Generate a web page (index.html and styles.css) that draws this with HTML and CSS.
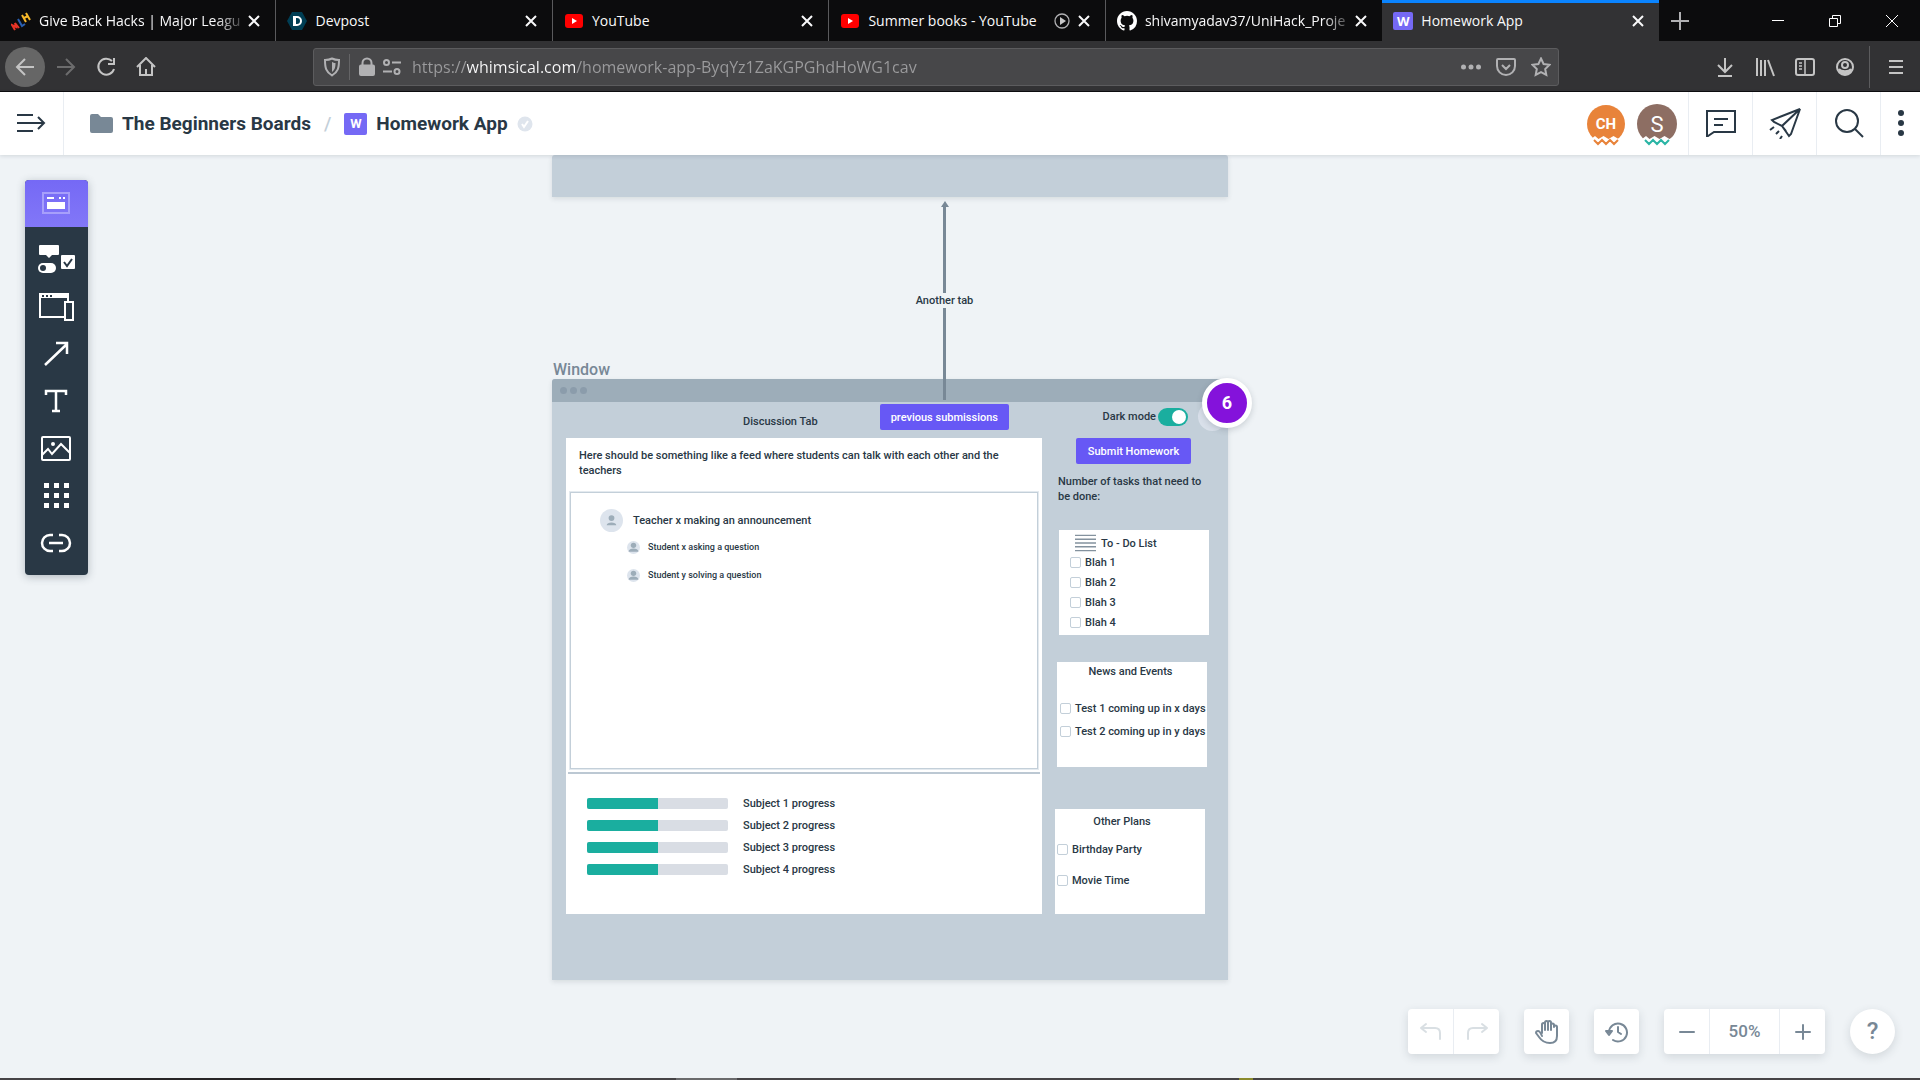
FILE: index.html
```html
<!DOCTYPE html>
<html lang="en">
<head>
  <meta charset="UTF-8">
  <meta name="viewport" content="width=device-width, initial-scale=1.0">
  <title>Homework App</title>
  <link rel="stylesheet" href="styles.css">
</head>
<body>
  <!-- Browser tabs -->
  <div class="tab-strip">
    <div class="tab">
      <svg class="favicon" viewBox="0 0 20 20" fill="none" stroke-width="2"><path d="m4 19-3-5 4 2-1-4 4 5" stroke="#e73427"/><path d="m7 8 4 7 3-2" stroke="#2a5fb0"/><path d="m11 4 4 7m0-9 4 7m-6-2 4-2" stroke="#f8b92a"/></svg>
      <span class="tab-title tab-title-long">Give Back Hacks | Major Leagu</span>
      <button class="tab-close" aria-label="Close tab"><svg viewBox="0 0 12 12"><path d="m1 1 10 10M11 1 1 11"/></svg></button>
    </div>
    <div class="tab">
      <svg class="favicon" viewBox="0 0 20 20"><path d="M5 1h10l5 9-5 9H5l-5-9z" fill="#003e54"/><path d="M6 5h4a5 5 0 0 1 0 10H6zm3 2v6h1a3 3 0 0 0 0-6z" fill="#fff" fill-rule="evenodd"/></svg>
      <span class="tab-title">Devpost</span>
      <button class="tab-close" aria-label="Close tab"><svg viewBox="0 0 12 12"><path d="m1 1 10 10M11 1 1 11"/></svg></button>
    </div>
    <div class="tab">
      <svg class="favicon" viewBox="0 0 20 20"><rect x="1" y="3" width="18" height="14" rx="3" fill="#f00"/><path d="m8 7 5 3-5 3z" fill="#fff"/></svg>
      <span class="tab-title">YouTube</span>
      <button class="tab-close" aria-label="Close tab"><svg viewBox="0 0 12 12"><path d="m1 1 10 10M11 1 1 11"/></svg></button>
    </div>
    <div class="tab">
      <svg class="favicon" viewBox="0 0 20 20"><rect x="1" y="3" width="18" height="14" rx="3" fill="#f00"/><path d="m8 7 5 3-5 3z" fill="#fff"/></svg>
      <span class="tab-title">Summer books - YouTube</span>
      <button class="tab-play" aria-label="Play tab"><svg viewBox="0 0 16 16"><circle cx="8" cy="8" r="7" fill="none" stroke="#b1b1b3" stroke-width="1.3"/><path d="m6 4 6 4-6 4z" fill="#c8c8c8"/></svg></button>
      <button class="tab-close" aria-label="Close tab"><svg viewBox="0 0 12 12"><path d="m1 1 10 10M11 1 1 11"/></svg></button>
    </div>
    <div class="tab">
      <svg class="favicon" viewBox="0 0 16 16" fill="#fff"><path d="M8 0C3.58 0 0 3.58 0 8c0 3.54 2.29 6.53 5.47 7.59.4.07.55-.17.55-.38 0-.19-.01-.82-.01-1.49-2.01.37-2.53-.49-2.69-.94-.09-.23-.48-.94-.82-1.13-.28-.15-.68-.52-.01-.53.63-.01 1.08.58 1.23.82.72 1.21 1.87.87 2.33.66.07-.52.28-.87.51-1.07-1.78-.2-3.64-.89-3.64-3.95 0-.87.31-1.59.82-2.15-.08-.2-.36-1.02.08-2.12 0 0 .67-.21 2.2.82a7.6 7.6 0 0 1 4 0c1.53-1.04 2.2-.82 2.2-.82.44 1.1.16 1.92.08 2.12.51.56.82 1.27.82 2.15 0 3.07-1.87 3.75-3.65 3.95.29.25.54.73.54 1.48 0 1.07-.01 1.93-.01 2.2 0 .21.15.46.55.38A8 8 0 0 0 16 8c0-4.42-3.58-8-8-8z"/></svg>
      <span class="tab-title tab-title-long">shivamyadav37/UniHack_Proje</span>
      <button class="tab-close" aria-label="Close tab"><svg viewBox="0 0 12 12"><path d="m1 1 10 10M11 1 1 11"/></svg></button>
    </div>
    <div class="tab tab-active">
      <span class="favicon logo-w">W</span>
      <span class="tab-title">Homework App</span>
      <button class="tab-close" aria-label="Close tab"><svg viewBox="0 0 12 12"><path d="m1 1 10 10M11 1 1 11"/></svg></button>
    </div>
    <button class="new-tab" aria-label="New tab"><svg viewBox="0 0 18 18"><path d="M9 0v18M0 9h18" stroke="#b1b1b3" stroke-width="2"/></svg></button>
    <div class="window-controls">
      <button aria-label="Minimize"><svg viewBox="0 0 14 14"><path d="M1 6.500h12"/></svg></button>
      <button aria-label="Restore"><svg viewBox="0 0 14 14"><path d="M1.500 4.500h8v8h-8zM4.500 4V1.500h8v8H10"/></svg></button>
      <button aria-label="Close window"><svg viewBox="0 0 14 14"><path d="m1 1 12 12M13 1 1 13"/></svg></button>
    </div>
  </div>

  <!-- Browser navigation -->
  <div class="nav-bar">
    <div class="nav-buttons">
      <button class="nav-back" aria-label="Back"><svg viewBox="0 0 20 20"><path d="M19 10H2m8-8-8 8 8 8"/></svg></button>
      <button class="nav-forward" aria-label="Forward"><svg viewBox="0 0 20 20"><path d="M1 10h17m-8-8 8 8-8 8"/></svg></button>
      <button aria-label="Reload"><svg viewBox="0 0 20 20"><path d="M16 4a8 8 0 1 0 2 8M18 1v6h-6"/></svg></button>
      <button aria-label="Home"><svg viewBox="0 0 20 20"><path d="m1 10 9-9 9 9M4 8v10h12V8M10 18v-6"/></svg></button>
    </div>
    <div class="url-bar">
      <svg class="url-icon" viewBox="0 0 20 20"><path d="M10 1.500c2 1 4 1.500 7 1.500 0 8-1 12-7 15.500C4 15 3 11 3 3c3 0 5-.5 7-1.500z"/><path d="M10 5c1 .5 2 1 3.500 1 0 5-1 7-3.500 9z" fill="#b1b1b3" stroke="none"/></svg>
      <span class="url-separator"></span>
      <svg class="url-icon" viewBox="0 0 20 20"><path d="M5.500 9V6a4.500 4.500 0 0 1 9 0v3"/><rect x="3" y="8.500" width="14" height="9.500" rx="1" fill="#b1b1b3"/></svg>
      <svg class="url-icon" viewBox="0 0 20 20"><circle cx="4.500" cy="5.500" r="2.500"/><path d="M10 5.500h9M1 14.500h9"/><circle cx="15" cy="14.500" r="2.500"/></svg>
      <input class="url-input" type="text" aria-label="Address" value="https://whimsical.com/homework-app-ByqYz1ZaKGPGhdHoWG1cav">
      <button aria-label="Page actions"><svg viewBox="0 0 20 20"><g fill="#b1b1b3" stroke="none"><circle cx="2.500" cy="10" r="2.500"/><circle cx="10" cy="10" r="2.500"/><circle cx="17.500" cy="10" r="2.500"/></g></svg></button>
      <button aria-label="Save to Pocket"><svg viewBox="0 0 20 20"><path d="M2 2h16q1 0 1 1v6a9 9 0 0 1-18 0V3q0-1 1-1zM6 8l4 4 4-4"/></svg></button>
      <button aria-label="Bookmark"><svg viewBox="0 0 20 20"><path d="m10 1.500 2.600 5.500 6 .8-4.400 4.200 1.100 6L10 15.200 4.700 18l1.100-6L1.400 7.800l6-.8z"/></svg></button>
    </div>
    <div class="nav-extra">
      <button aria-label="Downloads"><svg viewBox="0 0 20 20"><path d="M10 1v13m-7-6 7 7 7-7M3 19h14"/></svg></button>
      <button aria-label="Library"><svg viewBox="0 0 20 20"><path d="M2 1v18M6 3v16M10 3v16m3-16 6 16"/></svg></button>
      <button aria-label="Sidebars"><svg viewBox="0 0 20 20"><rect x="1" y="2" width="18" height="16" rx="2"/><path d="M10 2v16M4 6h3M4 9h3M4 12h3" stroke-width="1.500"/></svg></button>
      <button aria-label="Account"><svg viewBox="0 0 20 20"><circle cx="10" cy="10" r="8"/><circle cx="10" cy="8" r="3"/><path d="M4 12c2 3 10 3 12 0-1 7-11 7-12 0z" fill="#c4c4c4"/></svg></button>
      <span class="nav-divider"></span>
      <button aria-label="Menu"><svg viewBox="0 0 20 20"><path d="M3 4h14M3 10h14M3 16h14"/></svg></button>
    </div>
  </div>

  <!-- App header -->
  <header class="app-header">
    <button class="header-cell header-menu" aria-label="Open sidebar"><svg viewBox="0 0 32 20"><path d="M2 2h16M2 10h27M2 18h16m5-14 6 6-6 6"/></svg></button>
    <nav class="breadcrumbs">
      <svg class="folder" viewBox="0 0 23 19"><path d="M2 0h6l3 3h10q2 0 2 2v12q0 2-2 2H2q-2 0-2-2V2q0-2 2-2z" fill="#788896"/></svg>
      <a href="#">The Beginners Boards</a>
      <span class="slash">/</span>
      <span class="board-logo logo-w">W</span>
      <a href="#">Homework App</a>
      <svg class="saved" viewBox="0 0 16 16"><circle cx="8" cy="8" r="7.500" fill="#dfe5ed"/><path d="m5 8 2 3 4-6" fill="none" stroke="#fff" stroke-width="2"/></svg>
    </nav>
    <div class="avatars">
      <svg viewBox="0 0 40 44"><circle cx="20" cy="20" r="19" fill="#e8833a"/><path d="m5 35 4-3 3.500 3 5-3 5 3 5-3 5 3 3-2v12H5z" fill="#fff"/><path d="m8 36 4 4 4-4 4 4 4-4 4 4 4-4" fill="none" stroke="#e8833a" stroke-width="2"/><text x="20" y="25" class="initials">CH</text></svg>
      <svg viewBox="0 0 40 44"><circle cx="20" cy="20" r="20" fill="#8d6e63"/><path d="m5 35 4-3 3.500 3 5-3 5 3 5-3 5 3 3-2v12H5z" fill="#fff"/><path d="m8 36 4 4 4-4 4 4 4-4 4 4 4-4" fill="none" stroke="#2ab5a5" stroke-width="2"/><text x="20" y="28" class="initials initials-single">S</text></svg>
    </div>
    <button class="header-cell" aria-label="Comments"><svg viewBox="0 0 32 32"><path d="M2 4h28v21H9l-6 4H2z"/><path d="M9 12h14M9 18h9"/></svg></button>
    <button class="header-cell" aria-label="Share"><svg viewBox="0 0 32 32"><path d="M31 2 3 13l2 2 8 4zM31 2 13 19l7 10 2-2zM13 19l4 5M5 20l-4 3m9 1-3 3m6 2-2 3"/></svg></button>
    <button class="header-cell" aria-label="Search"><svg viewBox="0 0 32 32"><circle cx="14" cy="14" r="11"/><path d="m22 22 8 8"/></svg></button>
    <button class="header-cell header-more" aria-label="More"><svg viewBox="0 0 8 32"><g fill="#293845" stroke="none"><circle cx="4" cy="6" r="3"/><circle cx="4" cy="16" r="3"/><circle cx="4" cy="26" r="3"/></g></svg></button>
  </header>

  <!-- Board -->
  <main class="canvas">
    <div class="toolbar">
      <button class="tool tool-active" aria-label="Wireframe"><svg viewBox="0 0 40 32"><rect x="7" y="5" width="26" height="20" fill="none" stroke="#a79ffb" stroke-width="2"/><path d="M11 9h7v2h-7zm12 0h2v2h-2zm4 0h2v2h-2zM11 14h18v7H11z" fill="#fff"/></svg></button>
      <button class="tool" aria-label="Elements"><svg viewBox="0 0 40 32"><path d="M4 1h18q1 0 1 1v8q0 1-1 1h-6l-3 3-3-3H4q-1 0-1-1V2q0-1 1-1z" fill="#fff"/><rect x="2" y="19" width="18" height="10" rx="5" fill="#fff"/><circle cx="7" cy="24" r="3" fill="#293845"/><rect x="25" y="11" width="14" height="14" rx="1" fill="#fff"/><path d="m28 18 3 4 5-7" fill="none" stroke="#293845" stroke-width="2"/></svg></button>
      <button class="tool" aria-label="Frames"><svg viewBox="0 0 40 32" fill="none" stroke="#fff" stroke-width="2"><path d="M28 26H4V3h28v7"/><path d="M4 5h28" stroke-width="4"/><path d="M6 5h2m2 0h2m2 0h2" stroke="#293845"/><path d="M29 11h8v18h-8z"/></svg></button>
      <button class="tool" aria-label="Arrow"><svg viewBox="0 0 40 32" fill="none" stroke="#fff" stroke-width="2.500"><path d="M9 27 31 6M20 5h11v11"/></svg></button>
      <button class="tool" aria-label="Text"><svg viewBox="0 0 40 32" fill="none" stroke="#fff" stroke-width="2.500"><path d="M10 10V6h20v4M20 6v20m-4 0h8"/></svg></button>
      <button class="tool" aria-label="Image"><svg viewBox="0 0 40 32" fill="none" stroke="#fff" stroke-width="2"><rect x="6" y="5" width="28" height="23" rx="1"/><path d="m6 23 6-6 4 5 9-10 9 9"/><circle cx="17" cy="12" r="1"/></svg></button>
      <button class="tool" aria-label="Icons"><svg viewBox="0 0 40 32" fill="#fff"><path d="M8 4h5v5H8zm10 0h5v5h-5zm10 0h5v5h-5zM8 14h5v5H8zm10 0h5v5h-5zm10 0h5v5h-5zM8 24h5v5H8zm10 0h5v5h-5zm10 0h5v5h-5z"/></svg></button>
      <button class="tool" aria-label="Link"><svg viewBox="0 0 40 32" fill="none" stroke="#fff" stroke-width="2.500"><path d="M17 9h-3a8 8 0 0 0 0 16h3m6-16h3a8 8 0 0 1 0 16h-3M13 17h14"/></svg></button>
    </div>

    <div class="frame frame-above"></div>
    <section class="frame-group">
      <h2 class="frame-name">Window</h2>
      <div class="frame">
        <div class="frame-title"><i></i><i></i><i></i></div>
        <div class="frame-body">
          <div class="main-column">
            <div class="main-head">
              <span>Discussion Tab</span>
              <button class="btn">previous submissions</button>
            </div>
            <div class="panel">
              <p class="intro">Here should be something like a feed where students can talk with each other and the teachers</p>
              <div class="feed">
                <div class="post"><svg viewBox="0 0 24 24"><circle cx="12" cy="12" r="12" fill="#dde4ed"/><circle cx="12" cy="9.500" r="3" fill="#9dadb9"/><path d="M7 17c0-4 10-4 10 0z" fill="#9dadb9"/></svg>Teacher x making an announcement</div>
                <div class="post reply"><svg viewBox="0 0 24 24"><circle cx="12" cy="12" r="12" fill="#dde4ed"/><circle cx="12" cy="8" r="5" fill="#9dadb9"/><path d="M3 20c0-8 18-8 18 0z" fill="#9dadb9"/></svg>Student x asking a question</div>
                <div class="post reply"><svg viewBox="0 0 24 24"><circle cx="12" cy="12" r="12" fill="#dde4ed"/><circle cx="12" cy="8" r="5" fill="#9dadb9"/><path d="M3 20c0-8 18-8 18 0z" fill="#9dadb9"/></svg>Student y solving a question</div>
              </div>
              <hr>
              <div class="subjects">
                <div class="subject"><progress id="subject1" value="50" max="100"></progress><label for="subject1">Subject 1 progress</label></div>
                <div class="subject"><progress id="subject2" value="50" max="100"></progress><label for="subject2">Subject 2 progress</label></div>
                <div class="subject"><progress id="subject3" value="50" max="100"></progress><label for="subject3">Subject 3 progress</label></div>
                <div class="subject"><progress id="subject4" value="50" max="100"></progress><label for="subject4">Subject 4 progress</label></div>
              </div>
            </div>
          </div>
          <div class="side-column">
            <div class="side-head">
              <label for="darkMode">Dark mode</label>
              <input type="checkbox" id="darkMode" class="switch" checked>
              <span class="ghost-dot"></span>
            </div>
            <button class="btn btn-submit">Submit Homework</button>
            <p class="tasks">Number of tasks that need to be done:</p>
            <div class="card card-todo">
              <h3><svg viewBox="0 0 22 18"><path d="M0 1h22M0 5h22M0 9h22M0 13h22M0 17h22" stroke="#84929e" stroke-width="1.500"/></svg>To - Do List</h3>
              <label><input type="checkbox">Blah 1</label>
              <label><input type="checkbox">Blah 2</label>
              <label><input type="checkbox">Blah 3</label>
              <label><input type="checkbox">Blah 4</label>
            </div>
            <div class="card card-news">
              <h3>News and Events</h3>
              <label><input type="checkbox">Test 1 coming up in x days</label>
              <label><input type="checkbox">Test 2 coming up in y days</label>
            </div>
            <div class="card card-plans">
              <h3>Other Plans</h3>
              <label><input type="checkbox">Birthday Party</label>
              <label><input type="checkbox">Movie Time</label>
            </div>
          </div>
        </div>
      </div>
    </section>

    <div class="connector">
      <span class="connector-head"></span>
      <span class="connector-line"></span>
      <span class="connector-label">Another tab</span>
      <span class="connector-line connector-tail"></span>
    </div>
    <div class="comment-count">6</div>

    <div class="controls">
      <div class="control-group">
        <button aria-label="Undo" class="disabled"><svg viewBox="0 0 24 24"><path d="M7 4 2 8l5 4M2 8h14q5 0 5 5v6"/></svg></button>
        <button aria-label="Redo" class="disabled"><svg viewBox="0 0 24 24"><path d="m17 4 5 4-5 4M22 8H8q-5 0-5 5v6"/></svg></button>
      </div>
      <div class="control-group">
        <button aria-label="Pan"><svg viewBox="0 0 24 24"><path d="M7 13V4.500q0-1.500 1.500-1.500T10 4.500V10V2.500Q10 1 11.500 1T13 2.500V10V2.500Q13 1 14.500 1T16 2.500V10V5q0-1.500 1.500-1.500t1.500 1.500v2q0-1.500 1.500-1.500T22 7v9q0 7-7 7-7 0-11-6l-3-4q0-2 2-2t4 5"/></svg></button>
      </div>
      <div class="control-group">
        <button aria-label="History"><svg viewBox="0 0 24 24"><path d="M4 12a9 9 0 1 1 4 8M1 11l3 4 3-4zM13 7v5l3 2"/></svg></button>
      </div>
      <div class="control-group">
        <button aria-label="Zoom out"><svg viewBox="0 0 24 24"><path d="M5 12h14"/></svg></button>
        <button class="zoom-level">50%</button>
        <button aria-label="Zoom in"><svg viewBox="0 0 24 24"><path d="M5 12h14M12 5v14"/></svg></button>
      </div>
      <div class="control-group control-help">
        <button>?</button>
      </div>
    </div>
  </main>
  <div class="taskbar"><span class="task-dark"></span><span class="task-light"></span><span class="task-yellow"></span></div>
</body>
</html>
```
FILE: styles.css
```css
* {
  box-sizing: border-box;
}
body {
  margin: 0;
  min-height: 100vh;
  display: flex;
  flex-direction: column;
  font-family: Roboto, sans-serif;
  font-weight: 500;
  color: #293845;
  background-color: #eff3f6;
}
button {
  border: 0;
  padding: 0;
  background: none;
  font: inherit;
  color: inherit;
  display: flex;
  align-items: center;
  justify-content: center;
}
svg {
  flex: none;
}
a {
  color: inherit;
  text-decoration: none;
}
.logo-w {
  background-color: #7569f5;
  color: #fff;
  border-radius: 2px;
  font-weight: 700;
  text-align: center;
}

/* browser tabs */
.tab-strip {
  display: flex;
  height: 41px;
  background-color: #0c0c0d;
  font-family: "Open Sans", sans-serif;
  font-weight: 400;
  font-size: 14px;
  color: #f9f9fa;
}
.tab {
  flex: 0 0 14.4%;
  min-width: 0;
  display: flex;
  align-items: center;
  padding: 0 15px 0 11px;
  border-right: 1px solid #5a5a5c;
}
.tab:nth-child(5) {
  border-right: 0;
}
.tab-active {
  background-color: #323234;
  border-right: 0;
  border-top: 3px solid #0a84ff;
  padding-bottom: 3px;
}
.favicon {
  flex: none;
  width: 20px;
  height: 20px;
  margin-right: 8px;
}
.tab-strip .logo-w {
  height: 18px;
  font-size: 13px;
  line-height: 18px;
}
.tab-title {
  flex: 1;
  min-width: 0;
  white-space: nowrap;
  line-height: 24px;
}
.tab-title-long {
  mask-image: linear-gradient(to left, transparent, #000 32px);
}
.tab-close svg {
  width: 12px;
  height: 12px;
  stroke: #f9f9fa;
  stroke-width: 2;
}
.tab-play {
  margin-right: 8px;
}
.tab-play svg {
  width: 16px;
  height: 16px;
}
.new-tab {
  width: 42px;
}
.new-tab svg {
  width: 18px;
  height: 18px;
}
.window-controls {
  display: flex;
  margin-left: auto;
}
.window-controls button {
  width: 57px;
}
.window-controls svg {
  width: 14px;
  height: 14px;
  fill: none;
  stroke: #fff;
}

/* browser navigation */
.nav-bar {
  display: flex;
  align-items: center;
  height: 51px;
  padding: 2px 4px 0 5px;
  background-color: #323234;
  border-bottom: 1px solid #0c0c0d;
}
.nav-bar svg {
  width: 20px;
  height: 20px;
  fill: none;
  stroke: #c4c4c4;
  stroke-width: 2;
}
.nav-buttons {
  display: flex;
  width: 308px;
}
.nav-buttons button {
  width: 40px;
  height: 40px;
}
.nav-buttons .nav-back {
  margin-right: 1px;
  background-color: #666;
  border-radius: 50%;
}
.nav-buttons .nav-forward {
  opacity: 0.4;
}
.url-bar {
  flex: 1;
  display: flex;
  align-items: center;
  height: 38px;
  padding: 0 0 0 8px;
  background-color: #474749;
  border: 1px solid #5c5c5e;
  border-radius: 3px;
}
.url-bar svg {
  stroke: #b1b1b3;
}
.url-bar button {
  width: 35px;
  height: 36px;
}
.url-separator {
  width: 1px;
  height: 26px;
  margin: 0 7px;
  background-color: #646466;
}
.url-icon + .url-icon {
  margin-left: 5px;
}
/* only the host part of the address is bright */
.url-input {
  flex: 1;
  min-width: 0;
  height: 30px;
  margin-left: 10px;
  padding: 0;
  border: 0;
  outline: 0;
  font-family: "Open Sans", sans-serif;
  font-size: 16px;
  color: #9b9b9d;
  background: linear-gradient(to right, #9b9b9d 55px, #f9f9fa 55px, #f9f9fa 164px, #9b9b9d 164px);
  background-clip: text;
  -webkit-background-clip: text;
  -webkit-text-fill-color: transparent;
}
.nav-extra {
  display: flex;
  align-items: center;
  margin-left: 146px;
}
.nav-extra button {
  width: 40px;
  height: 40px;
}
.nav-divider {
  width: 1px;
  height: 42px;
  margin: 0 6px 0 4px;
  background-color: #5c5c5e;
}

/* app header */
.app-header {
  display: flex;
  align-items: center;
  height: 63px;
  background-color: #fff;
  box-shadow: 0 1px 4px rgba(41, 56, 69, 0.15);
  position: relative;
  z-index: 1;
}
.header-cell {
  width: 64px;
  height: 63px;
  padding-bottom: 2px;
  border-left: 1px solid #e9edf2;
}
.header-cell svg {
  width: 32px;
  height: 32px;
  fill: none;
  stroke: #293845;
  stroke-width: 2;
}
.header-menu {
  padding-right: 2px;
  border-left: 0;
  border-right: 1px solid #e9edf2;
}
.header-menu svg {
  height: 20px;
}
.header-more {
  width: 40px;
}
.header-more svg {
  width: 8px;
}
.breadcrumbs {
  flex: 1;
  display: flex;
  align-items: center;
  padding-left: 26px;
  gap: 9px;
  font-size: 19px;
  font-weight: 700;
}
.folder {
  width: 23px;
  height: 19px;
}
.slash {
  color: #c3cfd9;
  font-weight: 500;
  padding: 0 4px;
}
.board-logo {
  width: 23px;
  height: 22px;
  font-size: 13px;
  line-height: 22px;
}
.saved {
  width: 16px;
  height: 16px;
}
.avatars {
  display: flex;
  gap: 11px;
  margin-right: 11px;
}
.avatars svg {
  width: 40px;
  height: 44px;
  margin-top: 4px;
}
.initials {
  font-size: 15px;
  font-weight: 700;
  fill: #fff;
  text-anchor: middle;
}
.initials-single {
  font-size: 22px;
  font-weight: 400;
}

/* board */
.canvas {
  flex: 1;
  position: relative;
  overflow: hidden;
  background-color: #eff3f6;
  font-size: 11px;
  line-height: 15px;
}
.toolbar {
  position: absolute;
  left: 25px;
  top: 25px;
  width: 63px;
  padding-bottom: 10px;
  background-color: #293845;
  border-radius: 4px;
  box-shadow: 0 2px 8px rgba(41, 56, 69, 0.3);
}
.tool {
  width: 100%;
  height: 47px;
  padding-right: 2px;
}
.tool svg {
  width: 40px;
  height: 32px;
}
.tool-active {
  margin-bottom: 9px;
  border-radius: 4px 4px 0 0;
  background: linear-gradient(#7569f5, #8277f8);
}

.frame {
  background-color: #c3cfd9;
  border-radius: 3px 3px 0 0;
  box-shadow: 0 2px 5px rgba(41, 56, 69, 0.12);
}
.frame-above {
  position: absolute;
  left: 552px;
  top: 0;
  width: 676px;
  height: 42px;
}
.frame-group {
  position: absolute;
  left: 552px;
  top: 204px;
  width: 676px;
}
.frame-name {
  margin: 0;
  padding: 2px 0 0 1px;
  font-size: 16px;
  line-height: 18px;
  font-weight: 500;
  color: #788896;
}
.frame-title {
  display: flex;
  align-items: center;
  gap: 3px;
  height: 23px;
  padding-left: 8px;
  background-color: #9dadb9;
  border-radius: 3px 3px 0 0;
}
.frame-title i {
  width: 7px;
  height: 7px;
  border-radius: 50%;
  background-color: #8b9cab;
}
.frame-body {
  display: flex;
  gap: 13px;
  padding: 0 0 66px 14px;
}
.main-column {
  width: 476px;
}
.main-head {
  display: flex;
  align-items: flex-start;
  justify-content: space-between;
  height: 36px;
  padding: 2px 33px 0 177px;
}
.main-head span {
  padding-top: 10px;
}
.btn {
  height: 26px;
  padding: 0 11px;
  border-radius: 2px;
  background-color: #6758f5;
  color: #fff;
  white-space: nowrap;
}
.panel {
  height: 476px;
  padding: 10px 4px 0;
  background-color: #fff;
}
.intro {
  height: 44px;
  margin: 0;
  padding: 0 9px;
}
.feed {
  height: 277px;
  padding: 15px 29px;
  border: 1px solid #c3cfd9;
  box-shadow: 0 0 0 1px #e4eaef;
}
.post {
  display: flex;
  align-items: center;
  gap: 10px;
  height: 25px;
}
.post svg {
  width: 23px;
  height: 23px;
}
.reply {
  gap: 8px;
  height: 28px;
  padding-left: 27px;
  font-size: 9px;
}
.reply svg {
  width: 13px;
  height: 13px;
}
.panel hr {
  height: 2px;
  margin: 3px -2px 18px;
  border: 0;
  background-color: #bcc8d3;
}
.subject {
  display: flex;
  align-items: center;
  gap: 15px;
  height: 22px;
  padding-left: 17px;
}
.subject progress {
  appearance: none;
  width: 141px;
  height: 11px;
  border: 0;
  border-radius: 2px;
  overflow: hidden;
}
.subject progress::-webkit-progress-bar {
  background-color: #d9dde4;
}
.subject progress::-webkit-progress-value {
  background-color: #1aae9f;
}

.side-column {
  width: 160px;
}
.side-head {
  display: flex;
  align-items: center;
  justify-content: flex-end;
  gap: 2px;
  height: 29px;
  margin-right: -12px;
}
.switch {
  appearance: none;
  width: 30px;
  height: 18px;
  margin: 0;
  padding: 2px;
  border-radius: 9px;
  background-color: #1aae9f;
}
.switch::before {
  content: "";
  display: block;
  width: 14px;
  height: 14px;
  margin-left: auto;
  border-radius: 50%;
  background-color: #fff;
}
.ghost-dot {
  width: 29px;
  height: 29px;
  margin-left: 8px;
  border-radius: 50%;
  background-color: #d9e0ea;
}
.btn-submit {
  width: 115px;
  margin: 7px 0 0 21px;
}
.tasks {
  height: 56px;
  margin: 10px 0 0;
  padding-left: 3px;
}
.card {
  width: 150px;
  height: 105px;
  background-color: #fff;
}
.card h3 {
  display: flex;
  justify-content: center;
  margin: 0;
  font-size: 11px;
  font-weight: 500;
}
.card label {
  display: flex;
  align-items: center;
  gap: 4px;
  height: 20px;
  white-space: nowrap;
}
.card input {
  appearance: none;
  flex: none;
  width: 11px;
  height: 11px;
  margin: 0;
  border: 1px solid #c3cfd9;
  border-radius: 2px;
  background-color: #fff;
}
.card-todo {
  margin-left: 4px;
  padding: 4px 0 0 11px;
}
.card-todo h3 {
  justify-content: flex-start;
  align-items: center;
  gap: 5px;
  padding-left: 5px;
}
.card-todo svg {
  width: 21px;
  height: 18px;
}
.card-news {
  margin: 27px 0 0 2px;
  padding: 2px 0 0 3px;
}
.card-news h3 {
  margin: 0 6px 18px 0;
}
.card-news label {
  height: 23px;
}
.card-plans {
  margin-top: 42px;
  padding: 5px 0 0 2px;
}
.card-plans h3 {
  margin: 0 18px 5px 0;
}
.card-plans label {
  height: 31px;
}

/* arrow between the two windows */
.connector {
  position: absolute;
  left: 905px;
  top: 46px;
  width: 79px;
  height: 199px;
  display: flex;
  flex-direction: column;
  align-items: center;
}
.connector-head {
  border: 4px solid transparent;
  border-top: 0;
  border-bottom: 6px solid #788896;
}
.connector-line {
  flex: 14;
  width: 3px;
  background-color: #788896;
}
.connector-tail {
  flex: 15;
}
.connector-label {
  white-space: nowrap;
}
.comment-count {
  position: absolute;
  left: 1202px;
  top: 223px;
  width: 50px;
  height: 50px;
  border: 5px solid #fff;
  border-radius: 50%;
  background-color: #8412db;
  color: #fff;
  font-size: 18px;
  font-weight: 700;
  line-height: 40px;
  text-align: center;
  box-shadow: 0 2px 6px rgba(41, 56, 69, 0.2);
}

/* bottom controls */
.controls {
  position: absolute;
  right: 25px;
  bottom: 24px;
  display: flex;
  gap: 25px;
  color: #788896;
  font-size: 17px;
}
.control-group {
  display: flex;
  background-color: #fff;
  border-radius: 4px;
  box-shadow: 0 3px 10px rgba(41, 56, 69, 0.15);
}
.control-group button {
  width: 45px;
  height: 45px;
}
.control-group button + button {
  width: 46px;
  border-left: 1px solid #e9edf2;
}
.control-group svg {
  width: 24px;
  height: 24px;
  fill: none;
  stroke: #788896;
  stroke-width: 2;
  stroke-linecap: round;
  stroke-linejoin: round;
}
.control-group .disabled svg {
  stroke: #d9dfe3;
}
.control-group button.zoom-level {
  width: 70px;
}
.control-help {
  border-radius: 50%;
  font-size: 24px;
}

.taskbar {
  display: flex;
  height: 2px;
  background-color: #464446;
}
.task-dark {
  width: 430px;
  margin-left: 60px;
  background-color: #262426;
}
.task-light {
  width: 61px;
  margin-left: 186px;
  background-color: #6a6a6c;
}
.task-yellow {
  width: 14px;
  margin-left: 502px;
  background-color: #8a8a2c;
}
```
